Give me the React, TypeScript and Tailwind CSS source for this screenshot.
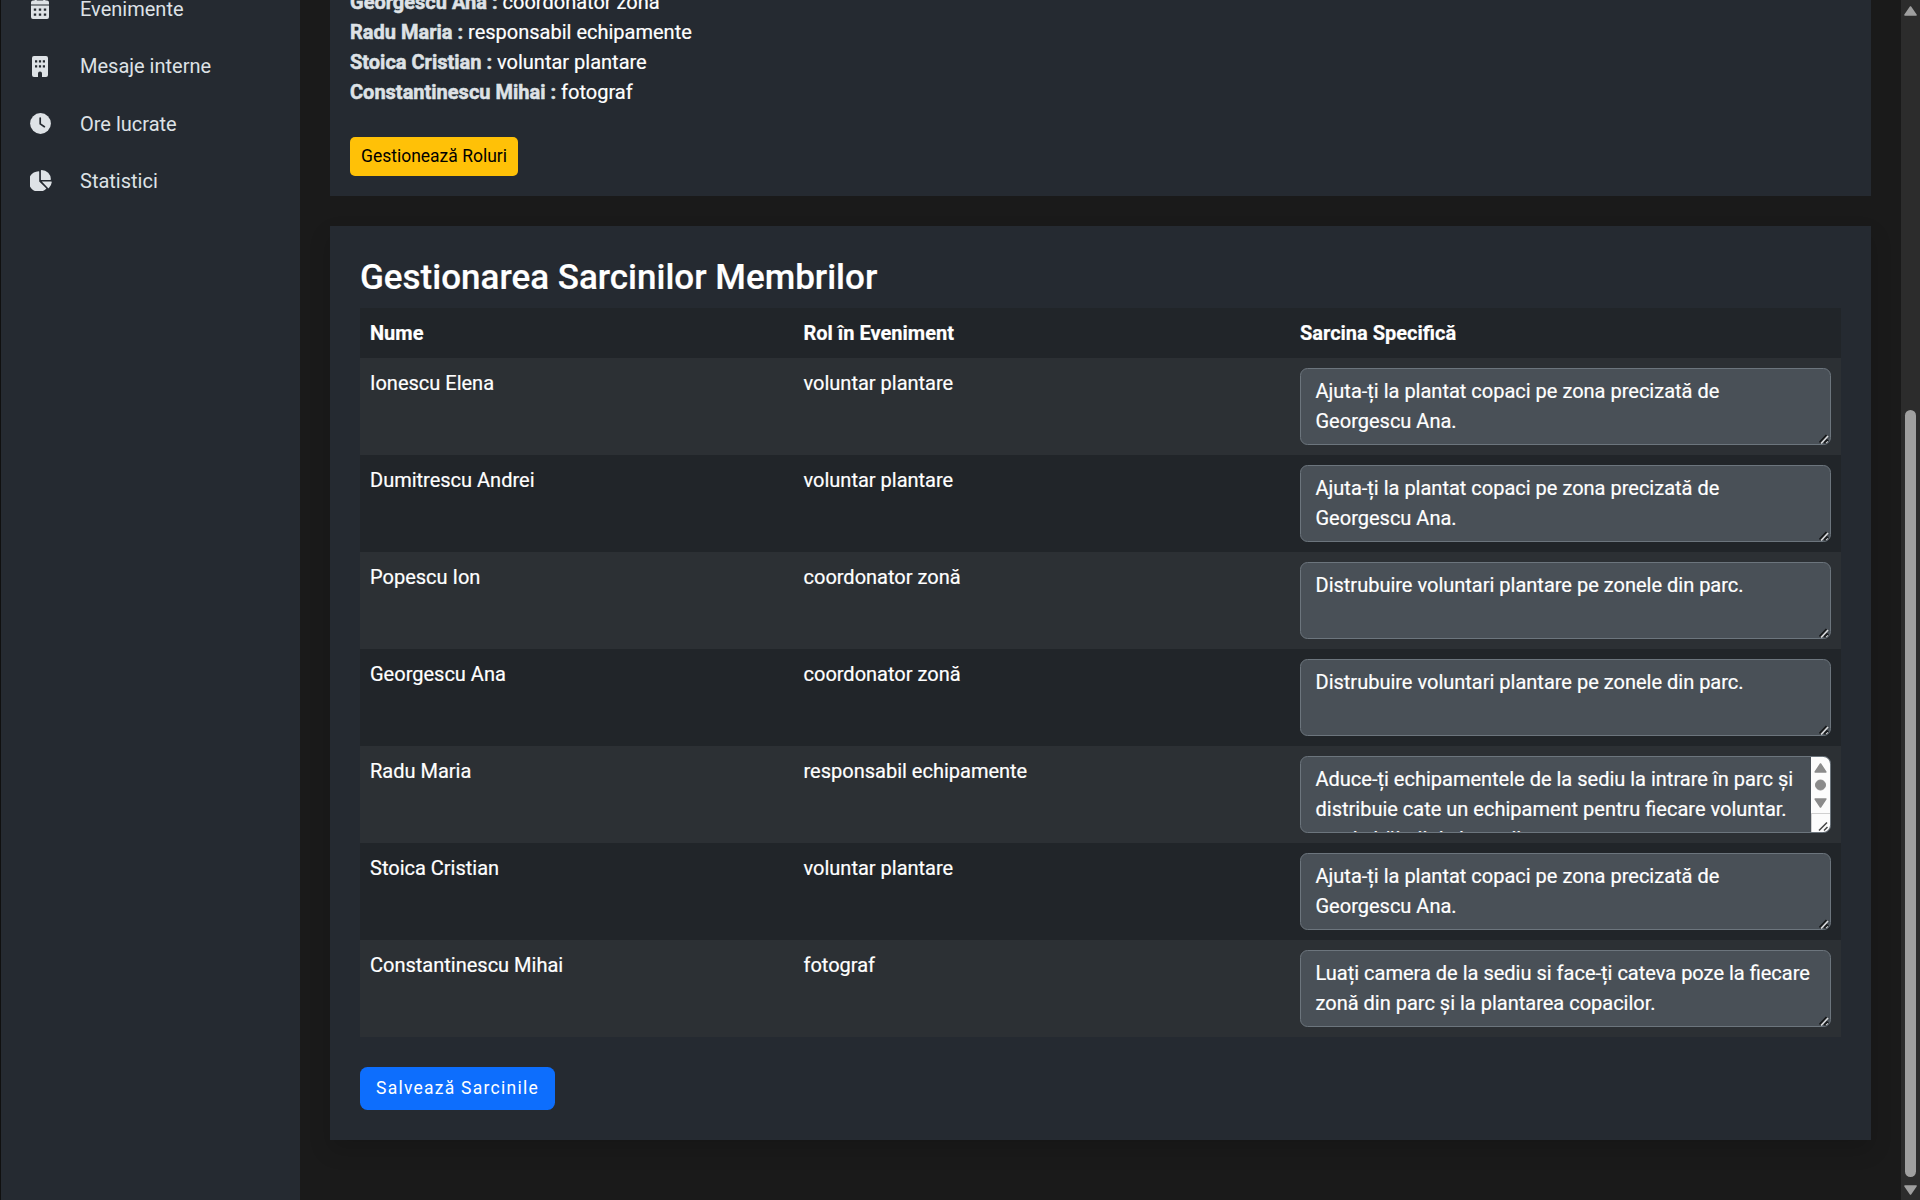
const nav = [
  {
    label: "Evenimente",
    icon: (
      <svg width="18" height="21" viewBox="0 0 18 21" fill="currentColor">
        <path d="M3.6 0h2.2v2.6h6.4V0h2.2v2.6H16a2 2 0 0 1 2 2V6.4H0V4.6a2 2 0 0 1 2-2h1.6z" />
        <path
          fillRule="evenodd"
          d="M0 7.6h18V19a2 2 0 0 1-2 2H2a2 2 0 0 1-2-2zM2.8 10.6v2.2h2.4v-2.2zM7.8 10.6v2.2h2.4v-2.2zM12.8 10.6v2.2h2.4v-2.2zM2.8 15.6v2.2h2.4v-2.2zM7.8 15.6v2.2h2.4v-2.2zM12.8 15.6v2.2h2.4v-2.2z"
        />
      </svg>
    ),
  },
  {
    label: "Mesaje interne",
    icon: (
      <svg width="16" height="21" viewBox="0 0 16 21" fill="currentColor">
        <path
          fillRule="evenodd"
          d="M2 0h12a2 2 0 0 1 2 2v17a2 2 0 0 1-2 2h-4v-3.4a2 2 0 0 0-4 0V21H2a2 2 0 0 1-2-2V2a2 2 0 0 1 2-2zM3 4.2v2.2h2.2V4.2zM6.9 4.2v2.2h2.2V4.2zM10.8 4.2v2.2H13V4.2zM3 9.2v2.2h2.2V9.2zM6.9 9.2v2.2h2.2V9.2zM10.8 9.2v2.2H13V9.2z"
        />
      </svg>
    ),
  },
  {
    label: "Ore lucrate",
    icon: (
      <svg width="21" height="21" viewBox="0 0 21 21">
        <circle cx="10.5" cy="10.5" r="10.4" fill="currentColor" />
        <path d="M10.2 5v5.9l4.2 2.8" fill="none" stroke="#252a31" strokeWidth="1.7" strokeLinecap="round" />
      </svg>
    ),
  },
  {
    label: "Statistici",
    icon: (
      <svg className="-mt-px ml-[2px]" width="22" height="21" viewBox="0 0 22 21" fill="currentColor">
        <path d="M9.2 1.2V11.4l7.2 7.2A10.3 10.3 0 1 1 8.6 1.2q.6 0 .6.4z" />
        <path d="M10.9.6q0-.6.7-.6a9.3 9.3 0 0 1 9.3 9.3q0 .6-.7.6h-9.3z" />
        <path d="M11.8 11.4h9.4q.7 0 .6.7a9.8 9.8 0 0 1-2.9 6q-.4.4-.9 0z" />
      </svg>
    ),
  },
];

const roles = [
  ["Georgescu Ana", "coordonator zonă"],
  ["Radu Maria", "responsabil echipamente"],
  ["Stoica Cristian", "voluntar plantare"],
  ["Constantinescu Mihai", "fotograf"],
];

const plant = "Ajuta-ți la plantat copaci pe zona precizată de Georgescu Ana.";
const split = "Distrubuire voluntari plantare pe zonele din parc.";
const rows = [
  { name: "Ionescu Elena", role: "voluntar plantare", task: plant },
  { name: "Dumitrescu Andrei", role: "voluntar plantare", task: plant },
  { name: "Popescu Ion", role: "coordonator zonă", task: split },
  { name: "Georgescu Ana", role: "coordonator zonă", task: split },
  {
    name: "Radu Maria",
    role: "responsabil echipamente",
    task: "Aduce-ți echipamentele de la sediu la intrare în parc și distribuie cate un echipament pentru fiecare voluntar. sau la băieții de la sacii",
    scroll: true,
  },
  { name: "Stoica Cristian", role: "voluntar plantare", task: plant },
  {
    name: "Constantinescu Mihai",
    role: "fotograf",
    task: "Luați camera de la sediu si face-ți cateva poze la fiecare zonă din parc și la plantarea copacilor.",
  },
];

function Grip() {
  return (
    <svg className="absolute right-px bottom-0" width="10" height="10" viewBox="0 0 10 10" fill="none">
      <path d="M1 9 8 1.5M5.5 9.5 9 6" stroke="#16181a" strokeWidth="3.2" />
      <path d="M2 9.5 9 2" stroke="#d8dadc" strokeWidth="1.7" />
      <path d="M7 9.5 9 7.5" stroke="#d8dadc" strokeWidth="1.5" />
    </svg>
  );
}

function InnerScrollbar() {
  return (
    <span className="absolute top-0 right-0 flex h-[75px] w-[19px] flex-col bg-[#fcfcfc]">
      <svg width="19" height="56" viewBox="0 0 19 56" fill="#8b8b8b" stroke="#8b8b8b" strokeLinejoin="round">
        <path d="M9.5 7 14.8 15H4.2z" strokeWidth="1.6" />
        <circle cx="9.5" cy="28" r="5" />
        <path d="M9.5 50 14.8 42H4.2z" strokeWidth="1.6" />
      </svg>
      <span className="block h-[19px] border-t border-l border-[#d0d0d0]">
        <svg width="18" height="18" viewBox="0 0 18 18" fill="none" stroke="#444" strokeWidth="1.5">
          <path d="M7 16.5 15 8.5M12 16.5 15.5 13" />
        </svg>
      </span>
    </span>
  );
}

export default function App() {
  return (
    <div className="flex h-[1200px] w-[1920px] overflow-hidden bg-[#1a1a1a] font-['Roboto',sans-serif] text-[20px] leading-[30px] text-white">
      <div className="w-px bg-[#101010]" />
      <nav className="flex w-[299px] flex-col bg-[#252a31] text-[#dee2e6]">
        <div className="-mt-5 flex flex-col">
          {nav.map((n) => (
            <div key={n.label} className="flex h-[57.5px] items-center">
              <span className="ml-[24px] flex w-[30px] justify-center">{n.icon}</span>
              <span className="ml-[25px]">{n.label}</span>
            </div>
          ))}
        </div>
      </nav>
      <main className="flex flex-1 flex-col px-[30px] [-webkit-text-stroke:0.2px_currentColor]">
        <section className="h-[196px] overflow-hidden bg-[#252a31] px-5">
          <div className="-mt-[13px]">
            {roles.map(([name, role]) => (
              <div key={name}>
                <b className="font-bold text-[#dee2e6] [-webkit-text-stroke:0.5px_currentColor]">{name} :</b> {role}
              </div>
            ))}
          </div>
          <button className="mt-[30px] block h-[39px] w-[168px] rounded-[5px] bg-[#ffc107] text-[17.5px] leading-[39px] text-black [-webkit-text-stroke:0]">
            Gestionează Roluri
          </button>
        </section>
        <section className="mt-[30px] h-[914px] bg-[#252a31] px-[30px] shadow-[0_10px_20px_rgba(0,0,0,0.15)]">
          <h2 className="mt-[31px] text-[35px] leading-[42px] font-medium">Gestionarea Sarcinilor Membrilor</h2>
          <div className="mt-[9px]">
            <div className="grid h-[50px] grid-cols-[433.5px_496.5px_1fr] items-center bg-[#212529] font-bold">
              <span className="pl-[10px]">Nume</span>
              <span className="pl-[10px]">Rol în Eveniment</span>
              <span className="pl-[10px]">Sarcina Specifică</span>
            </div>
            {rows.map((r) => (
              <div key={r.name} className="grid h-[97px] grid-cols-[433.5px_496.5px_1fr] odd:bg-[#212529] even:bg-[#2c3034]">
                <span className="p-[10px]">{r.name}</span>
                <span className="p-[10px]">{r.role}</span>
                <span className="p-[10px]">
                  <span
                    className={
                      "relative block h-[77px] overflow-hidden rounded-[7.5px] border border-[#6c757d] bg-[#495057] pt-[6.5px] pl-[14.5px] " +
                      (r.scroll ? "pr-[34px]" : "pr-[15px]")
                    }
                  >
                    {r.task}
                    {r.scroll ? <InnerScrollbar /> : <Grip />}
                  </span>
                </span>
              </div>
            ))}
          </div>
          <button className="mt-[30px] block h-[43px] w-[195px] rounded-[7.5px] bg-[#0d6efd] pb-px pl-[16px] text-left text-[17.5px] leading-[41px] tracking-[1.25px] [-webkit-text-stroke:0]">
            Salvează Sarcinile
          </button>
        </section>
      </main>
      <div className="flex w-[19px] flex-col items-center bg-[#2c2c2c]">
        <svg className="mt-[5px]" width="15" height="12" viewBox="0 0 15 12" fill="#9f9f9f" stroke="#9f9f9f" strokeWidth="1.6" strokeLinejoin="round">
          <path d="M7.5 2 13 10H2z" />
        </svg>
        <div className="mt-[393px] h-[767px] w-[11px] rounded-full bg-[#9f9f9f]" />
        <svg className="mt-[7px]" width="15" height="12" viewBox="0 0 15 12" fill="#9f9f9f" stroke="#9f9f9f" strokeWidth="1.6" strokeLinejoin="round">
          <path d="M7.5 10 13 2H2z" />
        </svg>
      </div>
    </div>
  );
}
